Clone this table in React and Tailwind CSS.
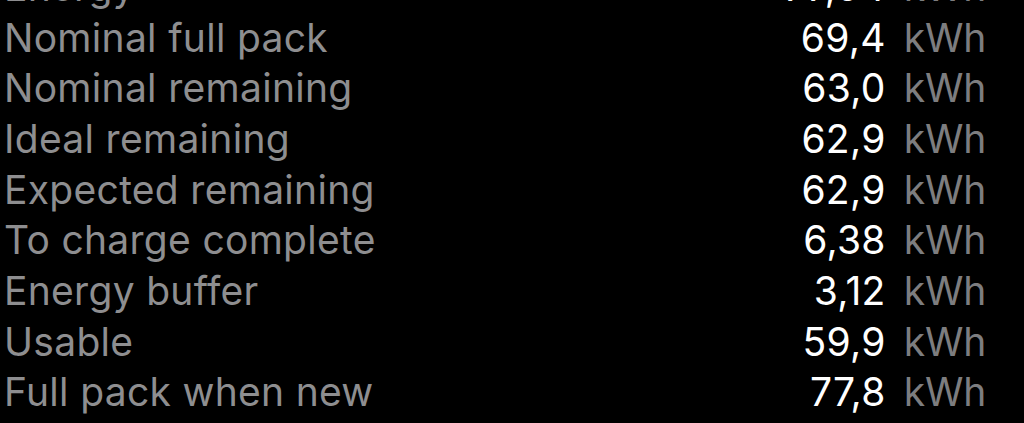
import React from 'react';

const rows = [
    { label: 'Energy', value: '77,04' },
    { label: 'Nominal full pack', value: '69,4' },
    { label: 'Nominal remaining', value: '63,0' },
    { label: 'Ideal remaining', value: '62,9' },
    { label: 'Expected remaining', value: '62,9' },
    { label: 'To charge complete', value: '6,38' },
    { label: 'Energy buffer', value: '3,12' },
    { label: 'Usable', value: '59,9' },
    { label: 'Full pack when new', value: '77,8' },
];

export default function App() {
    return (
        <div className="h-[423px] w-[1024px] overflow-hidden bg-black" style={{ fontFamily: 'Inter, "Noto Sans", sans-serif' }}>
            <div className="-mt-[39px] pl-[4px] pr-[38px]">
                {rows.map((row) => (
                    <div key={row.label} className="flex h-[50.7px] items-center text-[39px] leading-none tracking-[0.3px]">
                        <span className="flex-1 text-[#8e8e90]">{row.label}</span>
                        <span className="text-white">{row.value}</span>
                        <span className="ml-[18px] tracking-[-0.2px] text-[#7d7d7f]">kWh</span>
                    </div>
                ))}
            </div>
        </div>
    );
}
